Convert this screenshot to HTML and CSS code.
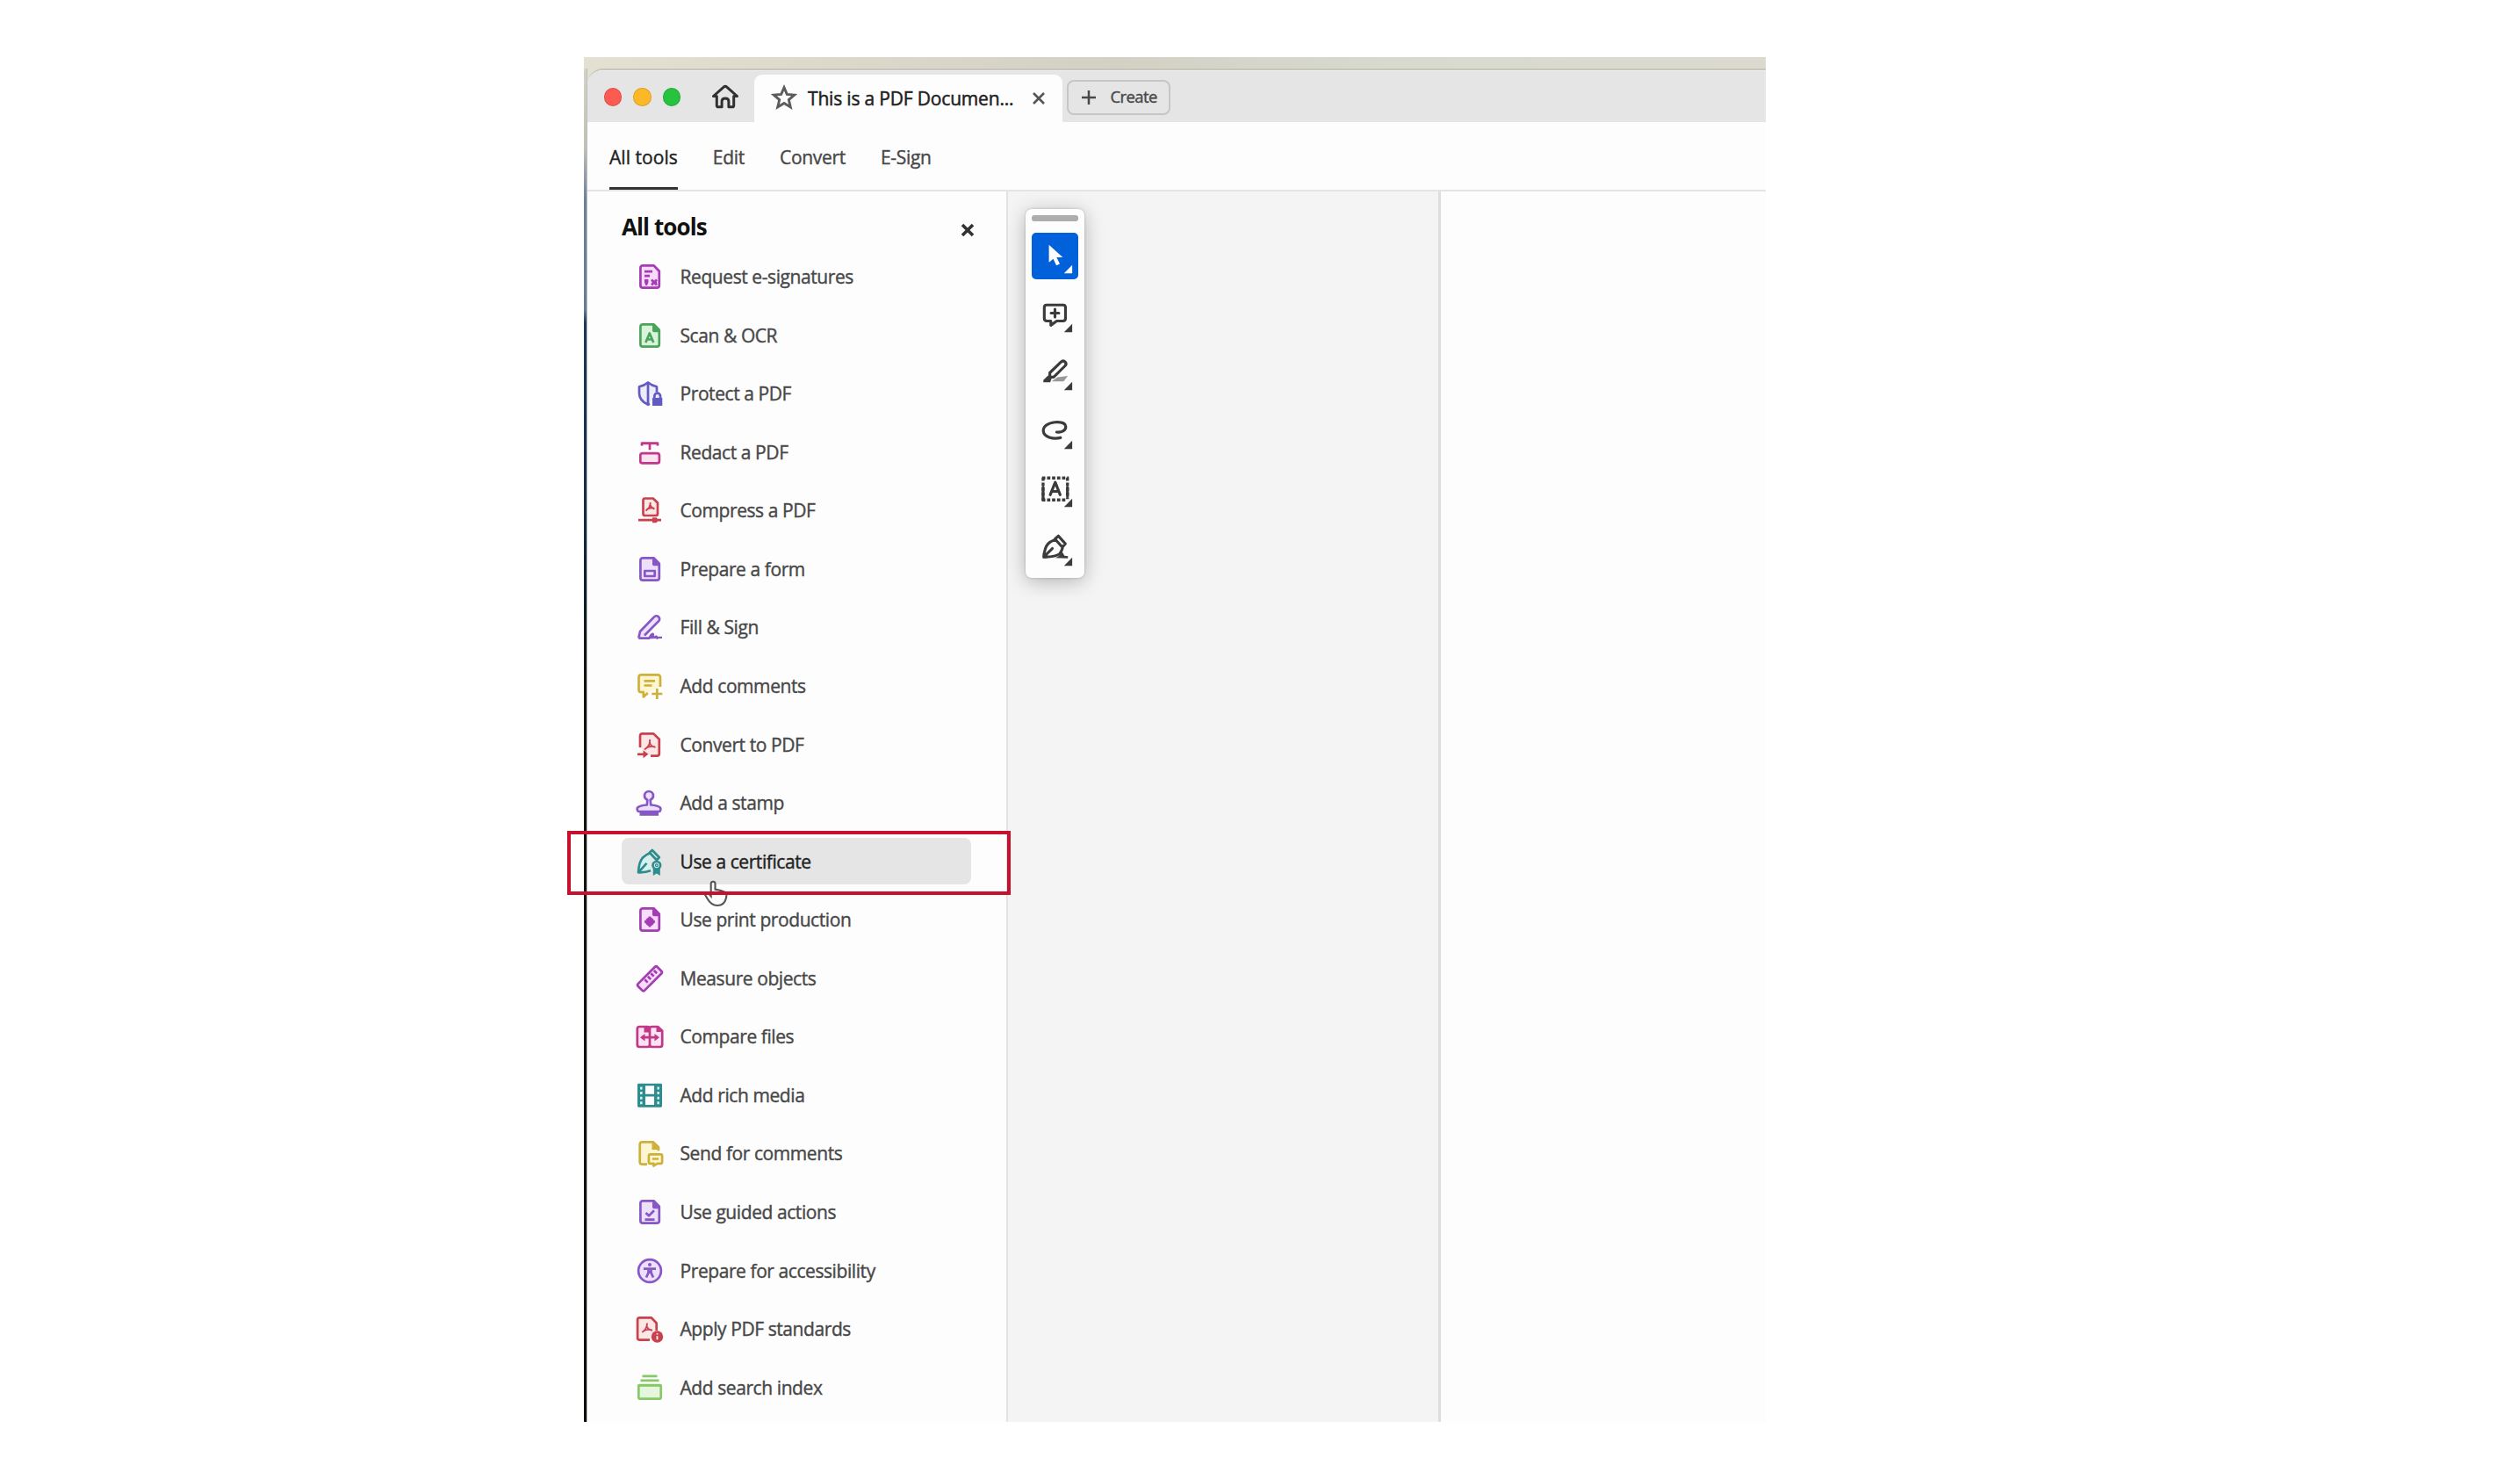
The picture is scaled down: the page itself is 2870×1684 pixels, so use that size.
FILE: index.html
```
<!DOCTYPE html>
<html lang="en">
<head>
<meta charset="utf-8">
<title>All tools</title>
<link rel="stylesheet" href="styles.css">
</head>
<body>
<svg class="defs" aria-hidden="true">
  <symbol id="doc" viewBox="0 0 30 30"><path d="M7 2.3h12.5l6.3 6.5V25a2.6 2.6 0 0 1-2.6 2.6H7A2.6 2.6 0 0 1 4.4 25V4.9A2.6 2.6 0 0 1 7 2.3z"/></symbol>
  <symbol id="fold" viewBox="0 0 30 30"><path class="solid" d="M18 2.5h2l5.6 6v2.8H20a2 2 0 0 1-2-2z"/></symbol>
</svg>
<div class="desktop">
  <div class="edge"></div>
  <div class="window">
    <header class="titlebar">
      <div class="lights"><i class="red"></i><i class="amber"></i><i class="green"></i></div>
      <svg class="home" viewBox="0 0 32 28"><path d="M6.300 13.500H2.500L14.200 3.100a2.600 2.600 0 0 1 3.600 0L29.500 13.500H25.700v10.700c0 1-.6 1.600-1.600 1.600h-4.200v-6.500c0-2-1.600-3.400-3.900-3.400s-3.900 1.400-3.900 3.400v6.500H7.900c-1 0-1.600-.6-1.600-1.600z"/></svg>
      <div class="tab">
        <svg class="star" viewBox="0 0 28 28"><path d="m14 2.600 3.300 7.800 8.400.7-6.400 5.500 2 8.300-7.300-4.500-7.300 4.500 2-8.300-6.400-5.500 8.400-.7z"/></svg>
        <span class="tab-name">This is a PDF Documen...</span>
        <svg class="close" viewBox="0 0 16 16"><path d="m2 2 12 12M14 2 2 14"/></svg>
      </div>
      <div class="create"><svg viewBox="0 0 18 18"><path d="M9 1v16M1 9h16"/></svg><span>Create</span></div>
    </header>
    <nav class="menu"><span class="active">All tools</span><span>Edit</span><span>Convert</span><span>E-Sign</span></nav>
    <main class="body">
      <aside class="panel">
        <div class="panel-head"><h1>All tools</h1><svg class="shut" viewBox="0 0 16 16"><path d="m2 2 12 12M14 2 2 14"/></svg></div>
        <ul class="tools">
          <li><svg class="ic magenta" viewBox="0 0 30 30"><use href="#doc"/><path d="M9 9.200h9M9 14.200h6" /><path class="solid" d="M9 18h4.400v3.400L12 25h-1.600L9 21.500z"/><path d="m17 18.500 6 6M23 18.500l-6 6M17.500 21.500h5.500"/></svg><span>Request e-signatures</span></li>
          <li><svg class="ic green-i" viewBox="0 0 30 30"><use href="#doc"/><use href="#fold"/><path d="m10.300 23 4.500-10.500L19.300 23M12 19.500h5.600"/></svg><span>Scan &amp; OCR</span></li>
          <li><svg class="ic indigo" viewBox="0 0 30 30"><path d="M23 13.500V7.300C19 6.500 16 5 13 2.500 10 5 7 6.500 3 7.300v7.500C3 21 7 25 13 27.800l2-1M13 2.500v25.300"/><path class="solid" d="M18 20h11.300v9H18z"/><path d="M20.300 20v-2a3.400 3.400 0 0 1 6.800 0v2"/></svg><span>Protect a PDF</span></li>
          <li><svg class="ic pink" viewBox="0 0 30 30"><path d="M6 7.500V4.600h18v2.900M15 4.600v7.600"/><rect x="4.300" y="16.200" width="21.600" height="11.200" rx="2.500"/></svg><span>Redact a PDF</span></li>
          <li><svg class="ic red-i" viewBox="0 0 30 30"><path d="M9.500 1.500h9.300l5.200 5V19c0 1.200-.7 2-2 2H9.500c-1.200 0-2-.8-2-2V3.500c0-1.200.8-2 2-2zM2 26.200h26"/><path class="thin" d="M15.500 6c.6 3-1 6.500-5 9.500M15.500 9c.8 2.500 2.500 4 5 4.500M11.500 14c3-1.800 5.500-2 8-1.500"/><path class="solid" d="M18 23.200h4.500l2.500 3-2.500 3H18z"/></svg><span>Compress a PDF</span></li>
          <li><svg class="ic purple" viewBox="0 0 30 30"><use href="#doc"/><use href="#fold"/><rect x="9.300" y="17" width="11.400" height="6"/></svg><span>Prepare a form</span></li>
          <li><svg class="ic purple" viewBox="0 0 30 30"><path d="M2.300 27.500 4 20 20 3.400a3.500 3.500 0 0 1 5.200 4.700L9 24.500M2.300 27.700H15"/><path class="solid" d="M13 28.500c1.500-4 3.500-7.500 6-6.800 1.800.6 1 3 1 3.800 1.500-1.300 3.500-1.300 4 .2h5v2.400h-4l-1.500 1-2-1z"/></svg><span>Fill &amp; Sign</span></li>
          <li><svg class="ic yellow" viewBox="0 0 30 30"><path d="M27 16V5.200c0-1.800-1-2.800-2.800-2.800H5.300C3.500 2.400 2.500 3.400 2.500 5.200v14.300c0 1.700 1 2.700 2.800 2.700h2.500v5.300l5-4.500M8.500 9.300H21M8.500 14.500h9M23.300 18v12M17.300 24h12"/></svg><span>Add comments</span></li>
          <li><svg class="ic red-i" viewBox="0 0 30 30"><path d="M4 18V5c0-1.700.9-2.600 2.600-2.600h12.700l6.500 6.300V25c0 1.600-1 2.600-2.600 2.600H16"/><path class="thin" d="M15 9c.7 4-1.500 8.500-6 11.500M15 13c1 2.700 3.500 4.500 6.500 4.700M11 18.500c3-1.500 7-2 10-1"/><path d="M1 25.800h8"/><path class="solid" d="m7.500 21.300 6 4.500-6 4.500z"/></svg><span>Convert to PDF</span></li>
          <li><svg class="ic purple" viewBox="0 0 30 30"><path d="M11.800 17.500 12.300 12C10 10.500 9 9 9 7.200 9 4.200 11.200 2 14 2s5 2.200 5 5.200c0 1.800-1 3.300-3.300 4.800l.5 5.500c5 .3 8.800 1 10.800 3.200.8 1.200.3 4.300-1.300 4.300H2.500C1 25 .3 22 1 20.700c2-2.200 5.800-2.900 10.800-3.200z"/><path class="solid" d="M3.500 25.500h21.500v4.300H3.500z"/></svg><span>Add a stamp</span></li>
          <li class="hover"><svg class="ic teal" viewBox="0 0 30 30"><path d="M14.800 5.500C12 6.500 9.500 8 6.800 10.800 3.300 14.800 2.300 21.300 2 27.300c5 .2 10-.3 14-2M2 27.300l9.500-10.500"/><path d="m14.800 4.800 3-2.800 8 8.300-3 3z"/><circle cx="22.800" cy="19.300" r="4.300"/><circle cx="22.800" cy="19.300" r=".6"/><path class="solid" d="M18.800 23h8v8l-4-2.600-4 2.600z"/></svg><span>Use a certificate</span></li>
          <li><svg class="ic magenta" viewBox="0 0 30 30"><use href="#doc"/><use href="#fold"/><circle class="solid" cx="15" cy="17.500" r="5"/><path d="M15 11.500v12M9 17.500h12"/></svg><span>Use print production</span></li>
          <li><svg class="ic magenta" viewBox="0 0 30 30"><rect x="-.5" y="10" width="31" height="10.600" rx="2" transform="rotate(-45 15 15.300)"/><path d="m9.300 16.300 3.300 3.300M12.800 12.800l3.300 3.300M16.300 9.300l3.300 3.300M19.800 6l3.300 3.300"/></svg><span>Measure objects</span></li>
          <li><svg class="ic pink" viewBox="0 0 30 30"><path d="M3.300 4h9.200c1.500 0 2.500.8 2.500 2.500v18c0 1.500-1 2.500-2.500 2.500H3.300c-1.500 0-2.500-1-2.500-2.500v-18C.8 4.800 1.800 4 3.300 4zM17.500 4h6.700l5 4.800v15.700c0 1.500-1 2.500-2.500 2.500h-9.200c-1.500 0-2.500-1-2.500-2.500v-18c0-1.700 1-2.500 2.500-2.500zM6 16.200h18"/><path class="solid" d="m9.500 12-5.500 4.200 5.500 4.200zM20.500 12l5.500 4.200-5.500 4.200zM8.500 4v6.500H14V4zM22.500 4v6h7z"/></svg><span>Compare files</span></li>
          <li><svg class="ic teal" viewBox="0 0 30 30"><path class="solid" d="M2.500 3h6v24.300h-6zM21.500 3h6v24.300h-6z"/><rect class="frame" x="2.300" y="3" width="25.400" height="24.300"/><path d="M8.600 3v24M21.400 3v24M8.600 15.200h12.800"/><path class="holes" d="M5.300 5.500v20M24.700 5.500v20"/></svg><span>Add rich media</span></li>
          <li><svg class="ic yellow" viewBox="0 0 30 30"><path d="M12 27.700H6.300c-1.700 0-2.600-1-2.600-2.600V4.900c0-1.700.9-2.600 2.600-2.600h12.500l6.200 6v4"/><path class="solid" d="M17.500 2.500 25 9.500V11h-7.500z"/><path d="M15.500 16.300h12c1 0 1.600.6 1.600 1.600v7.300c0 1-.6 1.600-1.600 1.600h-4l-4 2.700v-2.700h-4c-1 0-1.600-.6-1.600-1.600v-7.300c0-1 .6-1.600 1.600-1.600zM18 21.500h7"/></svg><span>Send for comments</span></li>
          <li><svg class="ic purple" viewBox="0 0 30 30"><use href="#doc"/><use href="#fold"/><path d="m10.500 16 3.500 3.300 6-6M9.500 23.700h11"/></svg><span>Use guided actions</span></li>
          <li><svg class="ic purple" viewBox="0 0 30 30"><circle cx="15" cy="15" r="12.900"/><circle class="solid" cx="15" cy="8" r="2"/><path d="M8 12.600h14M11 22.500l2.500-5.300v-4M19 22.500l-2.500-5.300v-4M13.500 16.500h3"/></svg><span>Prepare for accessibility</span></li>
          <li><svg class="ic red-i" viewBox="0 0 30 30"><path d="M15 27.700H3.500c-1.600 0-2.400-.9-2.400-2.500V4.700c0-1.600.8-2.400 2.400-2.400h13.200l6 6.200V17"/><path class="thin" d="M11.800 8.500c.6 4-1.500 7.500-5.500 10.500M11.800 12.500c1 2.700 3.200 3.800 6.200 4.200M8 17.300c3-1.500 6.500-1.800 9.500-1"/><circle class="solid" cx="23.500" cy="24" r="6.700"/><path class="info" d="M23.500 23.300v4M23.500 20.300v1.200"/></svg><span>Apply PDF standards</span></li>
          <li><svg class="ic lime" viewBox="0 0 30 30"><path d="M6.500 1.800h17M4.500 6.800h21"/><rect x="2.300" y="12" width="25.400" height="15.600" rx="1"/><path d="M2.300 12.500h25.400"/></svg><span>Add search index</span></li>
        </ul>
      </aside>
      <section class="canvas">
        <div class="toolbar">
          <div class="grip"></div>
          <div class="tool on"><svg viewBox="0 0 54 54"><path class="cursor-fill" d="M20 14v20.500l5-4.200 3.600 7.700 4-1.800-3.700-7.700H36z"/><path class="tri" d="M47 37.500V47h-9.500z"/></svg></div>
          <div class="tool"><svg viewBox="0 0 54 54"><path d="M17.500 15.500h18.800c1.900 0 2.900 1 2.900 2.900v12.800c0 1.900-1 2.900-2.900 2.900H29l-6.800 5v-5h-4.700c-1.900 0-2.900-1-2.900-2.900V18.400c0-1.900 1-2.900 2.900-2.900zM27 20.500v9M22.500 25h9"/><path class="tri" d="M47 37.500V47h-9.500z"/></svg></div>
          <div class="tool"><svg viewBox="0 0 54 54"><path class="shade" d="m30 32 12-1.500-5 6.500H23z"/><path d="m21 27 13-12.500c1.700-1.600 3.500-1.500 4.800-.2s1.300 3.200-.3 4.800L25.500 32H21z"/><path class="tri" d="m13.500 35.500 5.500-5.500 4 4-1.500 4h-8z"/><path class="tri" d="M47 37.500V47h-9.500z"/></svg></div>
          <div class="tool"><svg viewBox="0 0 54 54"><path d="M29 27.500c6 .8 11-2.500 10.500-6.500-.5-4-6-5.500-12.500-5-8 .6-14 5-13.500 10.500.6 6.500 11 9.800 20 7.500"/><path class="tri" d="M47 37.500V47h-9.500z"/></svg></div>
          <div class="tool"><svg viewBox="0 0 54 54"><path class="dots" d="M12 13.500h31M12 39h27M13.200 13v27M41.500 13v25"/><path d="M13.200 24v15M41.500 24v11"/><path d="m21.500 33 5.800-14.500L33 33M23.500 29h7.600" /><path class="tri" d="M47 37.500V47h-9.500z"/></svg></div>
          <div class="tool"><svg viewBox="0 0 54 54"><path d="M27.500 16.500C24 18 21.500 19 19 21.500c-3 3.300-4.500 9.300-5 15.300 7.700.2 15.200-1 18.700-3.800 1.700-2 2.300-4.500 3.300-7.500M14 36.800 24 27M27 16l4-3.500 8 9-3.500 4z"/><path class="tri" d="M13 38.500v-6l6 5.500zM27 38c4-1 6-4 8.500-7l2.500 4.500 4 .5v2.500z"/><path class="tri" d="M47 37.500V47h-9.500z"/></svg></div>
        </div>
      </section>
      <section class="page"></section>
    </main>
  </div>
  <svg class="pointer" viewBox="0 0 30 32"><path d="M9 16V4.500C9 .8 14 .8 14 4.500V11c4 .6 8 1.500 12 3.500 1.700 1 1.500 4 .8 7C25.500 27 22 30 16.500 30 10 30 7 26 4.500 21.500L2 17c-1-2.500 2-3.500 4-1.500L9 19z"/></svg>
  <div class="callout"></div>
</div>
</body>
</html>
```
FILE: styles.css
```
* { box-sizing: border-box; }
body { margin: 0; background: #fff; font-family: "Open Sans", "Noto Sans", sans-serif; color: #333; }
svg { display: block; fill: none; stroke: currentColor; flex: none; overflow: visible; }
.defs { position: absolute; width: 0; height: 0; }
.desktop {
  position: relative; display: flex; width: 1346px; height: 1554px; margin: 65px 0 0 665px; padding-top: 13px;
  background: linear-gradient(90deg, #e4e0d2, #d3d1c4 45%, #d8dad0 70%, #dcdace);
}
.edge {
  width: 4px; border-right: 1px solid #b9c0c4;
  background: linear-gradient(#d6d2c6 0, #c3bfb5 90px, #6c8099 150px, #667c96 275px, #1b3858 290px, #162c46 500px, #101c28 600px, #14150a 700px, #0e0f09 100%);
}
.window { flex: 1; display: flex; flex-direction: column; border-top: 2px solid #c8c5bb; border-top-left-radius: 18px; background: #fdfdfd; overflow: hidden; }
.titlebar { display: flex; height: 58.500px; background: #e5e5e5; border-top: 1px solid #efefed; }
.lights { display: flex; gap: 13px; padding: 19px 0 0 18.500px; }
.lights i { width: 20.500px; height: 20.500px; border-radius: 50%; border: 1px solid #0002; }
.red { background: #fd5a52; }
.amber { background: #fdb827; }
.green { background: #27c33f; }
.home { width: 32px; height: 28px; margin: 15px 0 0 34.500px; stroke-width: 3; color: #303030; stroke-linecap: round; stroke-linejoin: round; }
.tab { display: flex; width: 350.500px; height: 54px; margin: 4px 0 0 17.500px; padding-left: 20px; border-radius: 9px 9px 0 0; background: #fdfdfd; }
.star { width: 28px; height: 28px; margin-top: 12px; stroke-width: 2.900; color: #5c5c5c; }
.tab-name { width: 255px; margin: 11px 0 0 13px; font-size: 21px; line-height: 32px; letter-spacing: -.18px; white-space: nowrap; color: #222; -webkit-text-stroke: .5px; }
.close { width: 16px; height: 16px; margin-top: 19px; stroke-width: 2.600; color: #555; }
.create { display: flex; align-items: center; width: 118px; height: 40px; margin: 10px 0 0 5px; padding-left: 14px; border: 2px solid #c6c6c6; border-radius: 8px; font-size: 18.500px; letter-spacing: -.6px; color: #484848; -webkit-text-stroke: .4px; }
.create svg { width: 18px; height: 18px; margin-right: 16px; stroke-width: 2.500; }
.create span { line-height: 28px; margin-top: -3px; }
.menu { display: flex; gap: 40px; height: 79.500px; padding-left: 25px; border-bottom: 2px solid #e4e4e4; font-size: 21px; letter-spacing: -.3px; line-height: 28px; color: #484848; -webkit-text-stroke: .4px; }
.menu span { height: 77.500px; padding-top: 26px; white-space: nowrap; }
.menu .active { border-bottom: 3.500px solid #333; color: #222; letter-spacing: .05px; }
.body { flex: 1; display: flex; }
.panel { width: 479px; border-right: 2px solid #e3e3e3; }
.panel-head { display: flex; justify-content: space-between; height: 63.500px; padding: 23px 36px 0 39px; color: #111; }
h1 { margin: 0; font-size: 26px; line-height: 34px; font-weight: 700; letter-spacing: -.9px; white-space: nowrap; }
.shut { width: 16px; height: 16px; margin-top: 13px; stroke-width: 3.600; color: #333; }
.tools { list-style: none; margin: 0; padding: 7px 40px 0 39px; }
.tools li { display: flex; align-items: center; height: 53px; margin-bottom: 13.570px; padding-left: 17px; border-radius: 8px; font-size: 21px; letter-spacing: -.42px; color: #484848; white-space: nowrap; -webkit-text-stroke: .4px; }
.tools .hover { background: #e5e5e5; color: #222; }
.tools span { margin: 0 0 0 19.500px; }
.ic { width: 30px; height: 30px; stroke-width: 2.700; stroke-linejoin: round; }
.solid { fill: currentColor; stroke: none; }
.thin { stroke-width: 1.900; fill: none; }
.frame { fill: none; }
.holes { stroke: #d9f3f2; stroke-width: 2.500; stroke-dasharray: 3 2.600; }
.info { stroke: #fff; stroke-width: 1.800; }
.magenta { color: #a53bb5; fill: #f7ddfb; }
.green-i { color: #4ba45a; fill: #daf3dc; }
.indigo { color: #625bc4; fill: #ececfb; }
.pink { color: #c23888; fill: #fce3f1; }
.red-i { color: #c9414c; fill: #fde6e6; }
.purple { color: #8657c5; fill: #ece0fb; }
.yellow { color: #cdb13b; fill: #fdf6d0; }
.teal { color: #2e8c8d; fill: #d6f0f0; }
.lime { color: #87c968; fill: #e5f6dc; }
.canvas { width: 493px; padding: 20px 0 0 20px; background: #f4f4f4; border-right: 3px solid #dedede; }
.toolbar { display: flex; flex-direction: column; align-items: center; gap: 13.600px; width: 67px; height: 420px; padding-top: 7px; border-radius: 7px; background: #fdfdfd; box-shadow: 0 4px 22px #0004, 0 0 3px #0003; }
.grip { flex: none; width: 53px; height: 6.500px; border-radius: 3px; background: #adadad; }
.tool { flex: none; width: 53px; height: 53px; border-radius: 5px; color: #3b3b3b; }
.tool svg { width: 53px; height: 53px; stroke-width: 3.200; stroke-linejoin: round; stroke-linecap: round; }
.on { background: #0161db; color: #fff; }
.cursor-fill, .tri { fill: currentColor; stroke: none; }
.shade { fill: #999; stroke: none; }
.tool .dots { stroke-width: 3.400; stroke-dasharray: 3.800 2; stroke-linecap: butt; }
.page { flex: 1; background: #fdfdfd; }
.pointer { position: absolute; left: 136px; top: 937px; width: 29px; height: 31px; fill: #fdfdfd; stroke: #555; stroke-width: 2.200; }
.callout { position: absolute; left: -19px; top: 881px; width: 505px; height: 73px; border: 4.500px solid #c8102e; }
```
